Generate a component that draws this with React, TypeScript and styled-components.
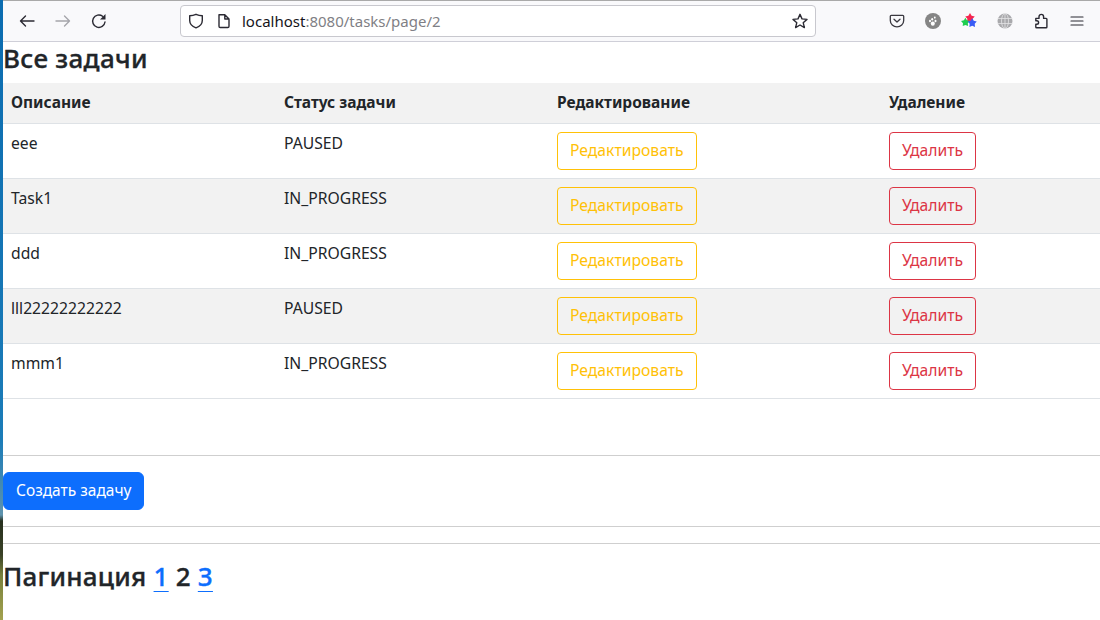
import React from "react";
import styled, { createGlobalStyle } from "styled-components";

const GlobalStyle = createGlobalStyle`
  html, body {
    margin: 0;
    padding: 0;
    background: #fff;
    overflow: hidden;
  }
  body {
    font-family: "Noto Sans", "Open Sans", sans-serif;
    color: #212529;
  }
`;

const Desktop = styled.div`
  display: flex;
  width: 1100px;
  height: 620px;
  overflow: hidden;
`;

const Wallpaper = styled.div`
  width: 3px;
  flex: none;
  background: linear-gradient(
    to bottom,
    #0b6cb0 0,
    #1b7cb8 440px,
    #5f93ad 515px,
    #27301f 521px,
    #3a4226 555px,
    #77803c 575px,
    #a3a24f 620px
  );
`;

const Browser = styled.div`
  flex: 1;
  min-width: 0;
  display: flex;
  flex-direction: column;
`;

const Toolbar = styled.div`
  height: 40px;
  flex: none;
  display: flex;
  align-items: center;
  background: #f9f9fb;
  border-top: 1px solid #a9a9a9;
  border-bottom: 1px solid #cfcfd8;
  padding-left: 16px;
  color: #2b2a33;
`;

const NavButton = styled.span<{ $muted?: boolean }>`
  width: 16px;
  height: 16px;
  margin-right: 20px;
  display: flex;
  color: ${({ $muted }) => ($muted ? "#a5a5ab" : "#2b2a33")};
`;

const UrlBar = styled.div`
  width: 636px;
  height: 32px;
  margin-left: 53px;
  box-sizing: border-box;
  display: flex;
  align-items: center;
  background: #fff;
  border: 1px solid #c8c8ce;
  border-radius: 4px;
  padding: 0 7px;
  font-size: 15px;
`;

const UrlIcon = styled.span`
  display: flex;
  margin-right: 12px;
`;

const UrlHost = styled.span`
  color: #15141a;
`;

const UrlRest = styled.span`
  color: #7f7f85;
`;

const UrlText = styled.div`
  flex: 1;
  white-space: nowrap;
  margin-left: -2px;
  padding-bottom: 1px;
`;

const ToolIcons = styled.div`
  display: flex;
  align-items: center;
  margin-left: 73px;
  gap: 20px;
`;

const ToolIcon = styled.span`
  width: 16px;
  height: 16px;
  display: flex;
`;

const Content = styled.main`
  flex: 1;
  min-height: 0;
`;

const Title = styled.h2`
  margin: 0;
  height: 41px;
  font-size: 26px;
  font-weight: 500;
  letter-spacing: 0.3px;
  -webkit-text-stroke: 0.35px currentColor;
  line-height: 32px;
`;

const Table = styled.table`
  width: 1097px;
  border-collapse: collapse;
  table-layout: fixed;
  font-size: 15.7px;
  line-height: 22px;
`;

const HeadCell = styled.th<{ $w: number }>`
  width: ${({ $w }) => $w}px;
  box-sizing: border-box;
  text-align: left;
  padding: 8px 8px 10px;
  font-size: 15.5px;
  font-weight: 700;
  border-bottom: 1px solid #dee2e6;
`;

const HeadRow = styled.tr`
  background: #f2f2f2;
`;

const Row = styled.tr<{ $striped: boolean }>`
  background: ${({ $striped }) => ($striped ? "#f2f2f2" : "#fff")};
`;

const Cell = styled.td`
  padding: 8px;
  vertical-align: top;
  border-bottom: 1px solid #dee2e6;
  height: 38px;
`;

const OutlineButton = styled.button<{ $color: string }>`
  display: block;
  height: 38px;
  box-sizing: border-box;
  padding: 0 12px 2px;
  font: inherit;
  color: ${({ $color }) => $color};
  background: transparent;
  border: 1px solid ${({ $color }) => $color};
  border-radius: 4px;
`;

const Divider = styled.hr<{ $top: number }>`
  margin: ${({ $top }) => $top}px 0 0;
  border: 0;
  border-top: 1px solid #cfcfcf;
  height: 0;
`;

const CreateButton = styled.button`
  display: block;
  margin-top: 16px;
  height: 38px;
  padding: 0 12px 2px;
  font: inherit;
  font-size: 15.5px;
  color: #fff;
  background: #0d6efd;
  border: 1px solid #0d6efd;
  border-radius: 6px;
`;

const Pagination = styled.h2`
  margin: 15px 0 0;
  font-size: 26px;
  font-weight: 500;
  letter-spacing: 0.25px;
  -webkit-text-stroke: 0.35px currentColor;
  line-height: 34px;
  display: flex;
  gap: 7px;
`;

const PageLink = styled.a`
  color: #0d6efd;
  text-decoration: underline;
  text-decoration-thickness: 1px;
  text-underline-offset: 5px;
`;

const tasks = [
  { description: "eee", status: "PAUSED" },
  { description: "Task1", status: "IN_PROGRESS" },
  { description: "ddd", status: "IN_PROGRESS" },
  { description: "lll22222222222", status: "PAUSED" },
  { description: "mmm1", status: "IN_PROGRESS" },
];

const starPoints = (cx: number, cy: number, r: number): string =>
  Array.from({ length: 10 }, (_, i) => {
    const angle = -Math.PI / 2 + (i * Math.PI) / 5;
    const radius = i % 2 === 0 ? r : r * 0.55;
    return `${cx + radius * Math.cos(angle)},${cy + radius * Math.sin(angle)}`;
  }).join(" ");

const Line: React.FC<{ d: string; width?: number }> = ({ d, width = 1.4 }) => (
  <svg width="16" height="16" viewBox="0 0 16 16" fill="none" stroke="currentColor" strokeWidth={width} strokeLinecap="round" strokeLinejoin="round">
    <path d={d} />
  </svg>
);

const ReloadIcon = () => (
  <svg width="16" height="16" viewBox="0 0 16 16" fill="none" stroke="currentColor" strokeWidth="1.4">
    <path d="M14 9a6.2 6.2 0 1 1-2.400-5.700" strokeLinecap="round" />
    <path d="M14.500 1v5.500H9z" fill="currentColor" stroke="none" />
  </svg>
);

const PocketIcon = () => (
  <svg width="16" height="16" viewBox="0 0 16 16" fill="none" stroke="#3a3940" strokeWidth="1.3">
    <path d="M2.300 2.300h11.400c.6 0 1 .4 1 1v4.200a6.700 6.300 0 0 1-13.400 0V3.300c0-.6.4-1 1-1z" />
    <path d="M5 6.200 8 9l3-2.800" strokeLinecap="round" strokeLinejoin="round" />
  </svg>
);

const PawIcon = () => (
  <svg width="16" height="16" viewBox="0 0 16 16">
    <circle cx="8" cy="8" r="8" fill="#858585" />
    <ellipse cx="7.800" cy="10.600" rx="2" ry="2.200" fill="#fff" />
    <ellipse cx="5" cy="8" rx="1" ry="1.300" fill="#fff" />
    <ellipse cx="7.200" cy="6.200" rx="1" ry="1.300" fill="#fff" />
    <ellipse cx="10.500" cy="8" rx="1" ry="1.300" fill="#fff" />
    <ellipse cx="9.800" cy="4.600" rx="0.900" ry="1.100" fill="#fff" />
  </svg>
);

const StarsIcon = () => (
  <svg width="16" height="16" viewBox="0 0 16 16">
    <polygon points={starPoints(9, 5, 5)} fill="#f5264f" />
    <polygon points={starPoints(4.400, 9.400, 4.600)} fill="#1fce4f" />
    <polygon points={starPoints(11.200, 10, 4.800)} fill="#3a5cf5" />
  </svg>
);

const GlobeIcon = () => (
  <svg width="16" height="16" viewBox="0 0 16 16" fill="none">
    <circle cx="8" cy="8" r="7.500" fill="#a9a9ac" />
    <g stroke="#e4e4e6" strokeWidth="0.800">
      <path d="M.5 5.500h15M.5 10.500h15M8 .5v15" />
      <ellipse cx="8" cy="8" rx="3.500" ry="7.500" />
    </g>
  </svg>
);

const App: React.FC = () => {
  return (
    <>
      <GlobalStyle />
      <Desktop>
        <Wallpaper />
        <Browser>
          <Toolbar>
            <NavButton>
              <Line d="M15 8H1.500M6.500 3 1.500 8l5 5" />
            </NavButton>
            <NavButton $muted>
              <Line d="M1 8h13.500M9.500 3l5 5-5 5" />
            </NavButton>
            <NavButton>
              <ReloadIcon />
            </NavButton>
            <UrlBar>
              <UrlIcon>
                <Line d="M8 1.300c2 .9 4 1.400 6.300 1.500V7.500c0 3.500-2.600 5.900-6.300 7.300-3.700-1.400-6.300-3.800-6.300-7.300V2.800C4 2.700 6 2.200 8 1.300z" />
              </UrlIcon>
              <UrlIcon>
                <Line d="M3 1.700h5.800l4.200 4.300v7.300a1.200 1.200 0 0 1-1.200 1.200H4.200A1.200 1.200 0 0 1 3 13.300zM8.800 1.700V6H13" />
              </UrlIcon>
              <UrlText>
                <UrlHost>localhost</UrlHost>
                <UrlRest>:8080/tasks/page/2</UrlRest>
              </UrlText>
              <Line d="M8 1.300l2 4.600 5 .5-3.800 3.300 1.200 4.900L8 12l-4.400 2.600 1.200-4.900L1 6.400l5-.5z" />
            </UrlBar>
            <ToolIcons>
              <ToolIcon>
                <PocketIcon />
              </ToolIcon>
              <ToolIcon>
                <PawIcon />
              </ToolIcon>
              <ToolIcon>
                <StarsIcon />
              </ToolIcon>
              <ToolIcon>
                <GlobeIcon />
              </ToolIcon>
              <ToolIcon>
                <Line d="M2.800 5.400h3.200V3.700a2.300 2.300 0 0 1 4.600 0v1.700h2.500a.8.8 0 0 1 .8.8V14a.8.8 0 0 1-.8.8H3.600a.8.8 0 0 1-.8-.8v-2.700h1a1.800 1.800 0 0 0 0-3.600h-1z" />
              </ToolIcon>
              <ToolIcon>
                <Line d="M2 4h12M2 8h12M2 12h12" width={1.2} />
              </ToolIcon>
            </ToolIcons>
          </Toolbar>
          <Content>
            <Title>Все задачи</Title>
            <Table>
              <thead>
                <HeadRow>
                  <HeadCell $w={273}>Описание</HeadCell>
                  <HeadCell $w={273}>Статус задачи</HeadCell>
                  <HeadCell $w={332}>Редактирование</HeadCell>
                  <HeadCell $w={219}>Удаление</HeadCell>
                </HeadRow>
              </thead>
              <tbody>
                {tasks.map((task, index) => (
                  <Row key={task.description} $striped={index % 2 === 1}>
                    <Cell>{task.description}</Cell>
                    <Cell>{task.status}</Cell>
                    <Cell>
                      <OutlineButton $color="#ffc107">Редактировать</OutlineButton>
                    </Cell>
                    <Cell>
                      <OutlineButton $color="#dc3545">Удалить</OutlineButton>
                    </Cell>
                  </Row>
                ))}
              </tbody>
            </Table>
            <Divider $top={56} />
            <CreateButton>Создать задачу</CreateButton>
            <Divider $top={16} />
            <Divider $top={16} />
            <Pagination>
              <span>Пагинация</span>
              <PageLink href="#">1</PageLink>
              <span>2</span>
              <PageLink href="#">3</PageLink>
            </Pagination>
          </Content>
        </Browser>
      </Desktop>
    </>
  );
};

export default App;
